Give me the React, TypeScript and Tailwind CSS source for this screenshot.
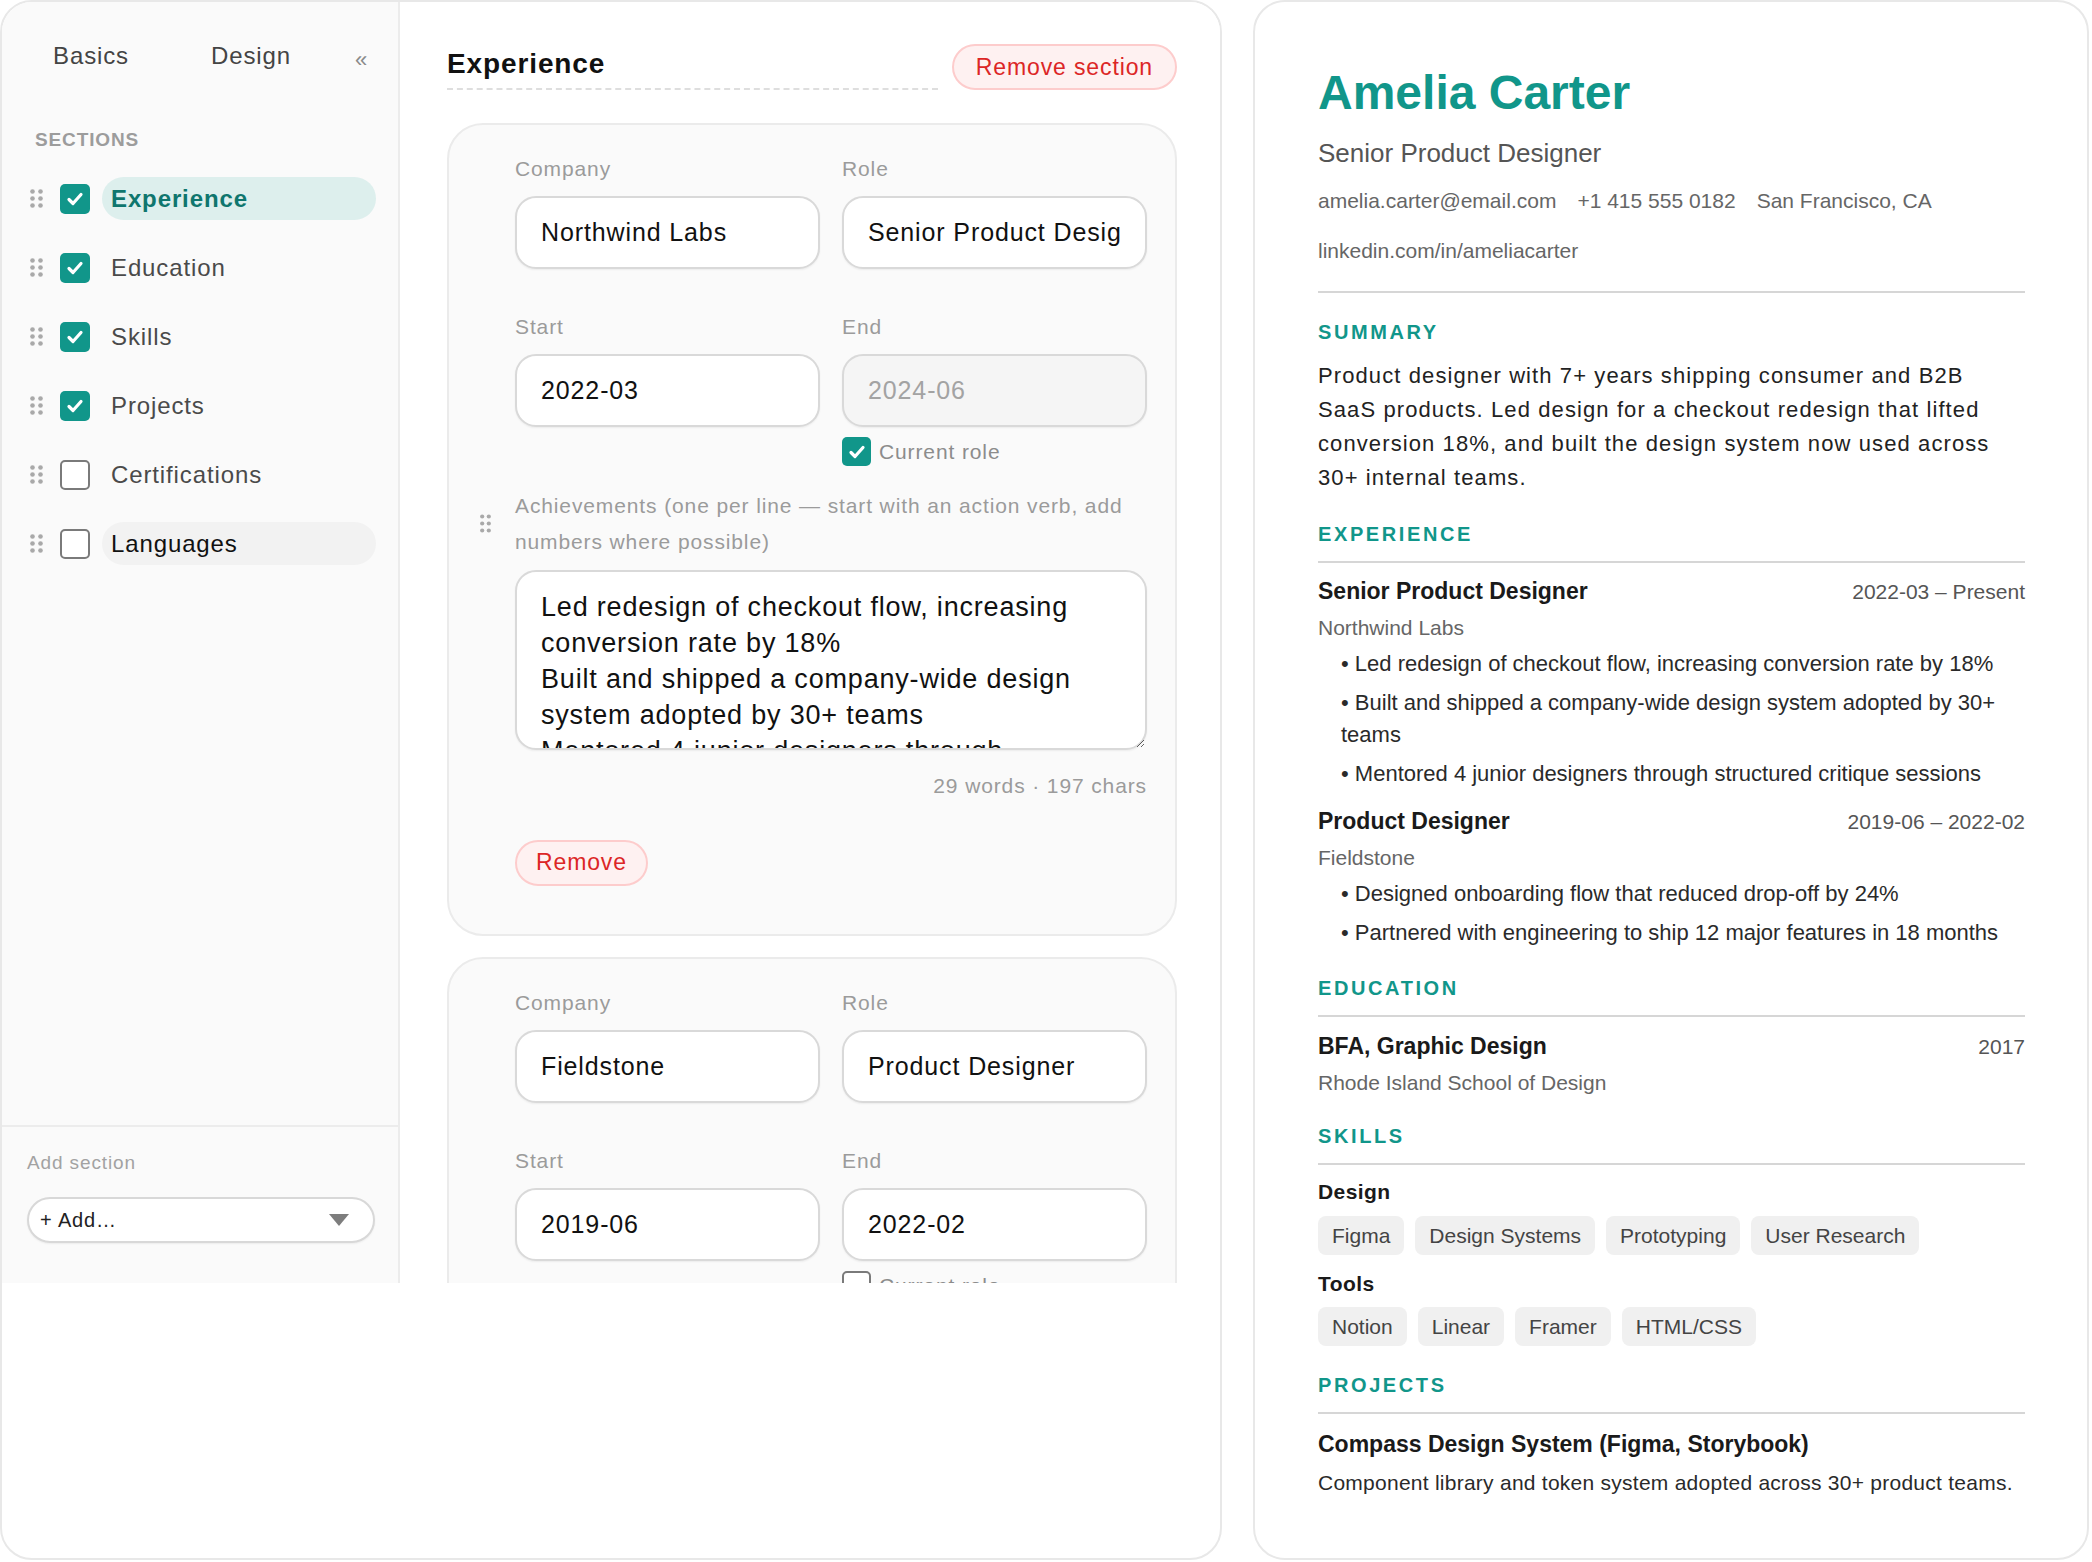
import { useState } from 'react';

const sections = [
  { label: 'Experience', checked: true, active: true },
  { label: 'Education', checked: true },
  { label: 'Skills', checked: true },
  { label: 'Projects', checked: true },
  { label: 'Certifications', checked: false },
  { label: 'Languages', checked: false, hover: true },
];

function DragHandle({ className = '' }: { className?: string }) {
  return (
    <svg width="13" height="19" viewBox="0 0 13 19" fill="#a9a9a9" className={className}>
      <circle cx="2.5" cy="2.5" r="2.3" />
      <circle cx="10.5" cy="2.5" r="2.3" />
      <circle cx="2.5" cy="9.5" r="2.3" />
      <circle cx="10.5" cy="9.5" r="2.3" />
      <circle cx="2.5" cy="16.5" r="2.3" />
      <circle cx="10.5" cy="16.5" r="2.3" />
    </svg>
  );
}

function Checkbox({ checked, size = 30 }: { checked: boolean; size?: number }) {
  if (!checked) {
    return (
      <span
        className="block shrink-0 rounded-[5px] border-2 border-[#7a7a7a] bg-white"
        style={{ width: size, height: size }}
      />
    );
  }
  return (
    <span
      className="flex shrink-0 items-center justify-center rounded-[5px] bg-[#11968a]"
      style={{ width: size, height: size }}
    >
      <svg width="20" height="20" viewBox="0 0 20 20" fill="none">
        <path d="M4 10.5l4 4 8-9" stroke="white" strokeWidth="3.2" strokeLinecap="round" strokeLinejoin="round" />
      </svg>
    </span>
  );
}

function Sidebar() {
  return (
    <aside className="flex h-full w-[398px] shrink-0 flex-col border-r-2 border-[#ececec] bg-[#fafafa]">
      <div className="mt-[30px] flex h-[48px] items-center pl-[9px]">
        <button className="w-[160px] text-center text-[24px] text-[#444]">Basics</button>
        <button className="w-[160px] text-center text-[24px] text-[#444]">Design</button>
        <span className="ml-[24px] mt-[6px] text-[22px] text-[#8a8a8a]">«</span>
      </div>
      <div className="mt-[49px] pl-[33px] text-[19px] font-bold leading-[22px] text-[#9c9c9c]">SECTIONS</div>
      <ul className="mt-[26px] flex flex-col gap-[26px] pl-[28px]">
        {sections.map((s) => (
          <li key={s.label} className="flex h-[43px] items-center">
            <DragHandle />
            <span className="ml-[17px]">
              <Checkbox checked={s.checked} />
            </span>
            <span
              className={
                'ml-[12px] flex h-[43px] w-[274px] items-center rounded-full pl-[9px] text-[24px] ' +
                (s.active
                  ? 'bg-[#ddefed] font-bold text-[#0f766e]'
                  : s.hover
                    ? 'bg-[#f2f2f2] text-[#111]'
                    : 'text-[#4a4a4a]')
              }
            >
              {s.label}
            </span>
          </li>
        ))}
      </ul>
      <div className="mt-auto border-t-2 border-[#ececec] px-[25px] pb-[40px] pt-[24px]">
        <div className="text-[19px] leading-[24px] text-[#a2a2a2]">Add section</div>
        <div className="mt-[22px] flex h-[46px] w-[348px] items-center justify-between rounded-full border-2 border-[#d8d8d8] bg-white pl-[11px] pr-[24px] shadow-[0_1px_2px_rgba(0,0,0,0.06)]">
          <span className="text-[20px] text-[#222]">+ Add…</span>
          <svg width="20" height="12" viewBox="0 0 20 12">
            <polygon points="0,0 20,0 10,12" fill="#7d7d7d" />
          </svg>
        </div>
      </div>
    </aside>
  );
}

const inputCls =
  'h-[73px] w-full rounded-[21px] border-2 border-[#d9d9d9] px-[24px] text-[25px] shadow-[0_1px_2px_rgba(0,0,0,0.06)] outline-none';

function Field({ label, value, disabled }: { label: string; value: string; disabled?: boolean }) {
  return (
    <label className="flex flex-col">
      <span className="text-[21px] leading-[26px] text-[#9b9b9b]">{label}</span>
      <input
        readOnly
        defaultValue={value}
        className={inputCls + ' mt-[14px] ' + (disabled ? 'bg-[#f5f5f5] text-[#a3a3a3]' : 'bg-white text-[#111]')}
      />
    </label>
  );
}

type Job = {
  company: string;
  role: string;
  start: string;
  end: string;
  current: boolean;
  achievements: string;
  words: string;
};

function ExperienceCard({ job }: { job: Job }) {
  return (
    <div className="shrink-0 rounded-[36px] border-2 border-[#ebebeb] bg-[#fafafa] pb-[48px] pl-[66px] pr-[28px] pt-[31px]">
      <div className="grid grid-cols-2 gap-x-[22px]">
        <Field label="Company" value={job.company} />
        <Field label="Role" value={job.role} />
      </div>
      <div className="mt-[45px] grid grid-cols-2 gap-x-[22px]">
        <Field label="Start" value={job.start} />
        <div className="flex flex-col">
          <Field label="End" value={job.end} disabled={job.current} />
          <div className="mt-[9px] flex items-center gap-[8px]">
            <Checkbox checked={job.current} size={29} />
            <span className="text-[21px] text-[#8c8c8c]">Current role</span>
          </div>
        </div>
      </div>
      <div className="-ml-[35px] mt-[20px] flex items-center gap-[24px]">
        <svg width="11" height="19" viewBox="0 0 11 19" fill="#a9a9a9" className="shrink-0">
          <circle cx="2.2" cy="2.5" r="2.1" />
          <circle cx="8.8" cy="2.5" r="2.1" />
          <circle cx="2.2" cy="9.5" r="2.1" />
          <circle cx="8.8" cy="9.5" r="2.1" />
          <circle cx="2.2" cy="16.5" r="2.1" />
          <circle cx="8.8" cy="16.5" r="2.1" />
        </svg>
        <span className="text-[21px] leading-[36px] text-[#9b9b9b]">
          Achievements (one per line — start with an action verb, add numbers where possible)
        </span>
      </div>
      <textarea
        readOnly
        defaultValue={job.achievements}
        className="mt-[10px] block h-[180px] w-full overflow-hidden rounded-[21px] border-2 border-[#d9d9d9] bg-white px-[24px] pt-[17px] text-[27px] leading-[36px] tracking-[0.03em] text-[#111] shadow-[0_1px_2px_rgba(0,0,0,0.06)] outline-none"
      />
      <div className="mt-[23px] text-right text-[21px] leading-[26px] text-[#9b9b9b]">{job.words}</div>
      <button className="mt-[41px] h-[46px] rounded-full border-2 border-[#fdcccc] bg-[#fef1f1] px-[19px] text-[23px] text-[#dc2626]">
        Remove
      </button>
    </div>
  );
}

const jobs: Job[] = [
  {
    company: 'Northwind Labs',
    role: 'Senior Product Designer',
    start: '2022-03',
    end: '2024-06',
    current: true,
    achievements:
      'Led redesign of checkout flow, increasing conversion rate by 18%\nBuilt and shipped a company-wide design system adopted by 30+ teams\nMentored 4 junior designers through structured critique sessions',
    words: '29 words · 197 chars',
  },
  {
    company: 'Fieldstone',
    role: 'Product Designer',
    start: '2019-06',
    end: '2022-02',
    current: false,
    achievements:
      'Designed onboarding flow that reduced drop-off by 24%\nPartnered with engineering to ship 12 major features in 18 months',
    words: '19 words · 118 chars',
  },
];

function Editor() {
  return (
    <main className="flex h-full flex-1 flex-col overflow-hidden bg-white pl-[47px] pr-[43px] pt-[42px]">
      <div className="flex items-end gap-[14px]">
        <h2 className="flex-1 border-b-2 border-dashed border-[#dedede] pb-[7px] text-[28px] font-bold leading-[34px] text-[#111]">
          Experience
        </h2>
        <button className="h-[46px] rounded-full border-2 border-[#fdcccc] bg-[#fef1f1] px-[22px] text-[23px] text-[#dc2626]">
          Remove section
        </button>
      </div>
      <div className="mt-[33px] flex flex-col gap-[21px]">
        {jobs.map((j) => (
          <ExperienceCard key={j.company} job={j} />
        ))}
      </div>
    </main>
  );
}

function SectionHead({ title, line = true }: { title: string; line?: boolean }) {
  return (
    <div
      className={
        'mt-[27px] text-[20px] font-bold leading-[24px] tracking-[0.13em] text-[#11968a] ' +
        (line ? 'border-b-2 border-[#d6d6d6] pb-[15px]' : '')
      }
    >
      {title}
    </div>
  );
}

function Chip({ children }: { children: string }) {
  return (
    <span className="flex h-[39px] items-center rounded-[8px] bg-[#f0f0f0] px-[14px] text-[21px] text-[#444]">
      {children}
    </span>
  );
}

function Entry({
  title,
  date,
  sub,
  bullets,
}: {
  title: string;
  date: string;
  sub: string;
  bullets?: string[];
}) {
  return (
    <div>
      <div className="flex items-baseline justify-between">
        <span className="text-[23px] font-bold leading-[30px] text-[#1a1a1a]">{title}</span>
        <span className="text-[21px] leading-[24px] text-[#555]">{date}</span>
      </div>
      <div className="mt-[8px] text-[21px] leading-[28px] text-[#666]">{sub}</div>
      {bullets && (
        <ul className="mt-[6px] flex flex-col gap-[7px] pl-[23px]">
          {bullets.map((b) => (
            <li key={b} className="text-[22px] leading-[32px] text-[#2a2a2a]">
              • {b}
            </li>
          ))}
        </ul>
      )}
    </div>
  );
}

function Resume() {
  return (
    <section className="h-[1560px] w-[836px] shrink-0 rounded-[32px] border-2 border-[#e8e8e8] bg-white pl-[63px] pr-[62px] pt-[67px] font-['Liberation_Sans',Arial,sans-serif]">
      <h1 className="text-[48px] font-bold leading-[48px] text-[#11968a]">Amelia Carter</h1>
      <div className="mt-[20px] text-[26px] leading-[32px] text-[#555]">Senior Product Designer</div>
      <div className="mt-[18px] flex flex-wrap gap-x-[21px] gap-y-[22px] border-b-2 border-[#d6d6d6] pb-[26px] text-[21px] leading-[28px] text-[#666]">
        <span>amelia.carter@email.com</span>
        <span>+1 415 555 0182</span>
        <span>San Francisco, CA</span>
        <span>linkedin.com/in/ameliacarter</span>
      </div>

      <SectionHead title="SUMMARY" line={false} />
      <p className="mt-[15px] text-[22px] leading-[34px] tracking-[0.05em] text-[#222]">
        Product designer with 7+ years shipping consumer and B2B SaaS products. Led design for a checkout redesign
        that lifted conversion 18%, and built the design system now used across 30+ internal teams.
      </p>

      <SectionHead title="EXPERIENCE" />
      <div className="mt-[13px]">
        <Entry
          title="Senior Product Designer"
          date="2022-03 – Present"
          sub="Northwind Labs"
          bullets={[
            'Led redesign of checkout flow, increasing conversion rate by 18%',
            'Built and shipped a company-wide design system adopted by 30+ teams',
            'Mentored 4 junior designers through structured critique sessions',
          ]}
        />
      </div>
      <div className="mt-[16px]">
        <Entry
          title="Product Designer"
          date="2019-06 – 2022-02"
          sub="Fieldstone"
          bullets={[
            'Designed onboarding flow that reduced drop-off by 24%',
            'Partnered with engineering to ship 12 major features in 18 months',
          ]}
        />
      </div>

      <SectionHead title="EDUCATION" />
      <div className="mt-[14px]">
        <Entry title="BFA, Graphic Design" date="2017" sub="Rhode Island School of Design" />
      </div>

      <SectionHead title="SKILLS" />
      <div className="mt-[13px] text-[21px] font-bold leading-[28px] tracking-[0.02em] text-[#1a1a1a]">Design</div>
      <div className="mt-[10px] flex flex-wrap gap-[11px]">
        {['Figma', 'Design Systems', 'Prototyping', 'User Research'].map((c) => (
          <Chip key={c}>{c}</Chip>
        ))}
      </div>
      <div className="mt-[15px] text-[21px] font-bold leading-[28px] tracking-[0.02em] text-[#1a1a1a]">Tools</div>
      <div className="mt-[9px] flex flex-wrap gap-[11px]">
        {['Notion', 'Linear', 'Framer', 'HTML/CSS'].map((c) => (
          <Chip key={c}>{c}</Chip>
        ))}
      </div>

      <SectionHead title="PROJECTS" />
      <div className="mt-[15px] text-[23px] font-bold leading-[30px] text-[#1a1a1a]">
        Compass Design System (Figma, Storybook)
      </div>
      <div className="mt-[10px] whitespace-nowrap text-[21px] leading-[28px] tracking-[0.012em] text-[#2a2a2a]">
        Component library and token system adopted across 30+ product teams.
      </div>
    </section>
  );
}

export default function App() {
  const [ready] = useState(true);
  return (
    <div className="flex h-[1562px] w-[2092px] items-start gap-[31px] bg-white">
      <div className="h-[1560px] w-[1222px] shrink-0 overflow-hidden rounded-[32px] border-2 border-[#e8e8e8] bg-white font-['Liberation_Sans',Arial,sans-serif] tracking-[0.055em]">
        {ready && (
          <div className="flex h-[1281px]">
            <Sidebar />
            <Editor />
          </div>
        )}
      </div>
      <Resume />
    </div>
  );
}
